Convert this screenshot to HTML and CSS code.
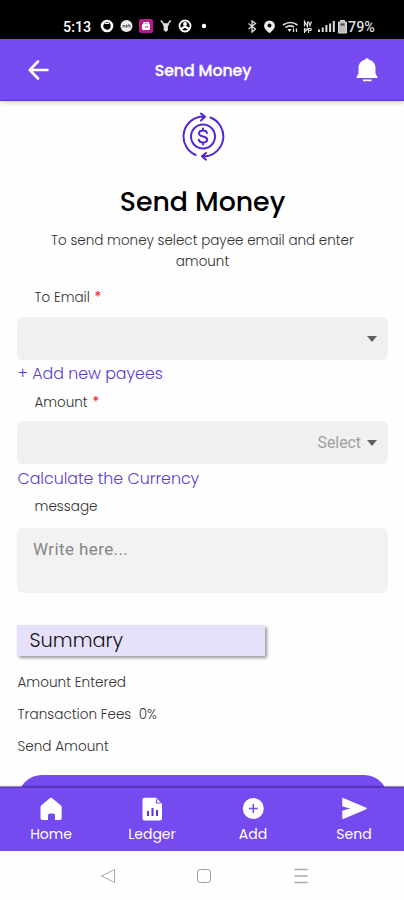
FILE: index.html
```
<!DOCTYPE html>
<html lang="en">
<head>
<meta charset="utf-8">
<title>Send Money</title>
<link rel="stylesheet" href="styles.css">
</head>
<body>
<div class="phone">
  <div class="status">
    <span class="clock">5:13</span>
    <svg class="status-left" width="106" height="16" viewBox="0 0 106 16" fill="none" stroke="#fff">
      <circle cx="7" cy="7" r="5" stroke-width="2.600"/><path d="M5 4.500h4" stroke-width="1"/>
      <circle cx="26.500" cy="7" r="6" fill="#eee" stroke="none"/><path d="M23 8.500v-2h2v2m1.500 0v-3m1.500 3V6h2v2.500" stroke="#555" stroke-width="1"/>
      <rect x="39" y="0" width="14" height="14" rx="2" fill="#b8188c" stroke="none"/><rect x="42" y="4.500" width="8" height="6.500" rx="1.500" fill="#fff" stroke="none"/><path d="M44 5V3.500h4.500V5" stroke-width="1.200"/><path d="M45 8h3" stroke="#b8188c"/>
      <path d="M60.800 1.500l3 3.500h4l3-3.500" stroke="#ddd" stroke-width="1.500"/><path d="M62.500 5h6.600l-1.300 3 .3 3-2.300 2-2.300-2 .3-3z" fill="#ddd" stroke="none"/>
      <circle cx="85" cy="7" r="5.500" stroke-width="1.800"/><circle cx="85" cy="5" r="2" fill="#fff" stroke="none"/><path d="M81 10l3-2h2l3 2" stroke-width="2.200"/>
      <circle cx="104" cy="7" r="2.200" fill="#fff" stroke="none"/>
    </svg>
    <svg class="status-right" width="104" height="16" viewBox="0 0 104 16" fill="none" stroke="#ddd">
      <path d="M4.500 4.500l7 5.500L8 13V2l3.500 2.500-7 5.500" stroke-width="1.300"/>
      <path d="M25.500 1.500a5.400 5.400 0 0 0-5.400 5.400c0 3 5.400 7.300 5.400 7.300s5.400-4.300 5.400-7.300a5.400 5.400 0 0 0-5.400-5.400z" fill="#eee" stroke="none"/><circle cx="25.500" cy="6.500" r="2" fill="#000" stroke="none"/>
      <path d="M39 6q7.500-5 14.500 0M41.500 8.500q4.500-3 8.500-.5" stroke-width="1.700"/><path d="M43.500 10h4l-2 3z" fill="#eee" stroke="none"/><path d="M49.500 9.500v3.500m3-3.500v3.500" stroke-width="1.300"/>
      <path d="M60.500 7.500v-5l3 5v-5m1 0l1.500 4 1.500-4M60.500 9v5m0-4h3l-3 3m4-4v5m0-4.500H67v2h-2.500" stroke-width="1.200"/>
      <path d="M75 13v-2.500m3.700 2.500V8.500m3.700 4.500V6m3.700 7V4.500m3.700 8.500V2" stroke-width="2"/>
      <path d="M94.500 3h2V1.500h4V3h2v11h-8z" fill="#bbb" stroke="#ddd"/><path d="M96.500 5.500h4" stroke="#444" stroke-width="2"/>
    </svg>
    <span class="battery">79%</span>
  </div>

  <header class="appbar">
    <svg width="22" height="22" viewBox="0 0 22 22" fill="none" stroke="#fff" stroke-width="2.600" stroke-linecap="round" stroke-linejoin="round"><path d="M19.500 11H2M10 2.500L1.800 11l8.200 8.500"/></svg>
    <h2 class="bar-title">Send Money</h2>
    <svg width="22" height="24" viewBox="0 0 22 24" fill="#fff"><path d="M11 .3c1 0 1.500.5 1.700 1.200C17 2.500 19.500 6 19.500 10v5.500l2 3.800V20H.5v-.7l2-3.800V10c0-4 2.500-7.500 6.800-8.500C9.500.8 10 .3 11 .3zM7 21.500h8.500v1.800H7z"/></svg>
  </header>

  <main class="content">
    <svg class="hero" width="44" height="50" viewBox="0 0 44 50" fill="none" stroke="#5426d6" stroke-width="2" stroke-linecap="round" stroke-linejoin="round">
      <circle cx="22" cy="24.500" r="12"/>
      <path d="M14.500 43A20.200 20.200 0 0 1 19 4.700h4M20 1.500l4 3.200-4 3.800M29.500 5.500A20.200 20.200 0 0 1 25 44.300h-4M25 41l-4 3.300 4 3.400"/>
      <path d="M26 21c-.5-1.700-2-2.500-4-2.500-2.300 0-4 1-4 2.900 0 4.100 8.200 2 8.200 6.100 0 2-1.800 3-4.200 3-2.200 0-3.800-1-4.200-2.800M22 16.500v2m0 12v2"/>
    </svg>
    <h1 class="title">Send Money</h1>
    <p class="intro">To send money select payee email and enter<br>amount</p>

    <label class="label first">To Email <b class="req">*</b></label>
    <div class="field after-first"><i class="caret"></i></div>
    <a class="link payees">+ Add new payees</a>
    <label class="label amount">Amount <b class="req">*</b></label>
    <div class="field"><span class="select">Select</span><i class="caret"></i></div>
    <a class="link calculate">Calculate the Currency</a>
    <label class="label message">message</label>
    <div class="textarea">Write here...</div>

    <h3 class="summary">Summary</h3>
    <div class="row entered">Amount Entered</div>
    <div class="row fees">Transaction Fees&nbsp; 0%</div>
    <div class="row total">Send Amount</div>
    <div class="submit"></div>
  </main>

  <nav class="tabs">
    <a class="tab"><svg width="24" height="24" viewBox="0 0 24 24" fill="#fff"><path d="M12 .8q.8 0 1.500.6l8.200 6.900q1 .9 1 2V21q0 2-2 2h-4.700v-4.500q0-2-1.700-2h-3.600q-1.700 0-1.700 2V23H3.500q-2 0-2-2V10.300q0-1.200 1-2l8-6.900Q11.200.8 12 .8z"/></svg><span>Home</span></a>
    <a class="tab"><svg width="24" height="24" viewBox="0 0 24 24"><path fill="#fff" d="M4.500.7h11.700l5.800 6V21.500q0 2-2 2H4.500q-2 0-2-2V2.700q0-2 2-2z"/><path d="M16.500 2v4H21" fill="none" stroke="#754bf0" stroke-width="1.200"/><path d="M8 19v-5m4.500 5v-8m4.500 8v-6" stroke="#6030df" stroke-width="2" fill="none"/></svg><span>Ledger</span></a>
    <a class="tab"><svg width="24" height="24" viewBox="0 0 24 24"><circle cx="12.300" cy="11.500" r="10.500" fill="#fff"/><path d="M12.300 7v9M7.800 11.500h9" stroke="#754bf0" stroke-width="1.500"/></svg><span>Add</span></a>
    <a class="tab"><svg width="26" height="24" viewBox="0 0 26 24"><path fill="#fff" stroke="#fff" stroke-width="1.500" stroke-linejoin="round" d="M2 1.800l23 9.700L2 21.200v-7l10-2.700-10-2.700z"/></svg><span>Send</span></a>
  </nav>

  <div class="sysnav">
    <svg width="16" height="16" viewBox="0 0 16 16" fill="none" stroke="#aaa"><path d="M14.500 1.500v13L1.500 8z"/></svg>
    <svg width="16" height="16" viewBox="0 0 16 16" fill="none" stroke="#999"><rect x="1.500" y="1.500" width="13" height="13" rx="3"/></svg>
    <svg width="16" height="16" viewBox="0 0 16 16" fill="none" stroke="#aaa" stroke-width="1.300"><path d="M1.500 1.500h13m-13 6.500h13m-13 6.500h13"/></svg>
  </div>
</div>
</body>
</html>
```
FILE: styles.css
```
* { box-sizing: border-box; }
body {
  margin: 0;
  background: #fefefe;
  font-family: Poppins, Inter, sans-serif;
}
h1, h2, h3, p { margin: 0; }
.phone { width: 404px; height: 900px; display: flex; flex-direction: column; overflow: hidden; }
svg { display: block; flex: none; }

.status {
  height: 39px; flex: none; background: #000; color: #fff;
  display: flex; align-items: center; padding: 14px 28px 0 63px;
  font: 500 14.300px Roboto, sans-serif;
}
.clock { width: 37px; }
.status-right { margin-left: auto; }
.battery { width: 28px; white-space: nowrap; color: #ddd; }

.appbar {
  height: 62px; flex: none; background: #754bf0; color: #fff;
  display: flex; align-items: center; justify-content: space-between;
  padding: 0 26px 0 28px; border-bottom: 1px solid #5c32dc;
  box-shadow: 0 2px 4px rgba(0, 0, 0, .18);
}
.bar-title { font-size: 15.8px; font-weight: 500; letter-spacing: -.1px; padding-top: 1px; -webkit-text-stroke: .3px #fff; }

.content {
  flex: 1; min-height: 0; overflow: hidden; padding: 11px 16px 0 17px;
  display: flex; flex-direction: column; color: #333;
}
.hero { align-self: center; }
.title { margin-top: 22px; line-height: 36px; font-size: 26.8px; font-weight: 500; color: #000; text-align: center; }
.intro { margin-top: 11px; line-height: 20.5px; font-size: 13.5px; font-weight: 300; text-align: center; white-space: nowrap; }
.label { height: 28px; line-height: 29px; padding-left: 17.5px; font-size: 13.5px; font-weight: 300; }
.label.first { margin-top: 11px; }
.label.message { font-size: 13.6px; }
.req { color: #ee3030; font-weight: 500; margin-left: 1px; }
.field {
  margin-top: 5px; height: 43px; flex: none; border-radius: 6px; background: #f0f0f0;
  display: flex; align-items: center; justify-content: flex-end; padding-right: 11px;
}
.after-first { margin-top: 6px; }
.caret { border: 5px solid transparent; border-top: 6px solid #606060; border-bottom: 0; }
.select { font: 15.8px Roboto, sans-serif; color: #a0a0a0; margin-right: 6px; }
.link { height: 28px; line-height: 28px; padding-left: .5px; font-size: 15.8px; font-weight: 300; color: #5b3bd6; }
.calculate { line-height: 30px; }
.textarea {
  margin-top: 8px; height: 65px; flex: none; border-radius: 6px; background: #f2f2f2;
  padding: 11px 16px; font: 17px/21px Roboto, sans-serif; letter-spacing: .4px; color: #858585;
}
.summary {
  margin-top: 32px; width: 248px; height: 31px; line-height: 31px; flex: none; padding-left: 12.5px;
  background: #e6e0fb; color: #111; font-size: 19.4px; font-weight: 300;
  box-shadow: 2px 2px 3px rgba(0, 0, 0, .4);
}
.row { height: 32px; line-height: 33px; flex: none; padding-left: .5px; font-size: 13.6px; font-weight: 300; }
.row.entered { margin-top: 10px; }
.submit { margin: 13px 0 0 1px; height: 48px; flex: none; border-radius: 24px; background: #754bf0; }

.tabs {
  height: 64px; flex: none; background: #754bf0; color: #fff; border-top: 1px solid #5737b6;
  display: grid; grid-template-columns: repeat(4, 1fr); position: relative; box-shadow: 0 -1px 1px rgba(50, 20, 130, .45);
}
.tab { display: flex; flex-direction: column; align-items: center; padding-top: 9px; font-size: 14px; line-height: 24px; }
.tab span { margin-top: 1px; padding-left: 1px; }
.sysnav { height: 49px; flex: none; display: flex; justify-content: center; align-items: center; gap: 80.500px; padding-left: 4px; }
```
